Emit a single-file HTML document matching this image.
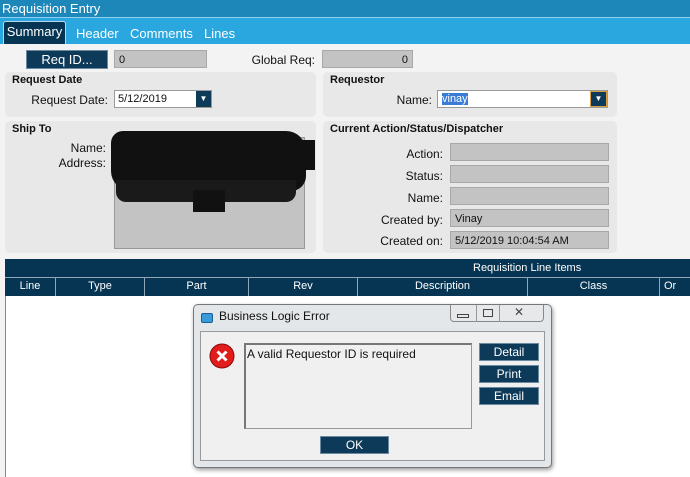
<!DOCTYPE html>
<html><head><style>
*{margin:0;padding:0;box-sizing:border-box}
body{width:690px;height:477px;overflow:hidden;background:#f3f3f3;font-family:"Liberation Sans",Arial,sans-serif;font-size:11px;color:#111;position:relative}
.a{position:absolute}
.fld{position:absolute;background:#c3c3c3;border:1px solid #a8a8a8;padding:3px 4px 0;font-size:11px}
.pnl{position:absolute;background:#e8e8e8;border-radius:5px}
.pt{position:absolute;font-weight:bold;font-size:11px}
.lbl{position:absolute;text-align:right;font-size:12px}
.btn{position:absolute;background:#0e3a5a;color:#fff;text-align:center;font-size:12px;border:1px solid #6b8aa0}
.col{position:absolute;top:277px;height:19px;color:#fff;border-right:1px solid #8fa7b8;text-align:center;line-height:19px;font-size:11px}
</style></head><body>
<div class="a" style="left:0;top:0;width:690px;height:17px;background:#1d87b9;color:#fff;font-size:13px;padding-left:2px;line-height:17px">Requisition Entry</div>
<div class="a" style="left:0;top:17px;width:690px;height:27px;background:#2aa7df;border-top:1px solid #8fd0ee"></div>
<div class="a" style="left:3px;top:21px;width:63px;height:23px;background:#053553;border:1px solid #b9d9ea;border-bottom:none;border-radius:3px 3px 0 0;color:#fff;font-size:13px;line-height:20px;text-align:center">Summary</div>
<div class="a" style="left:76px;top:26px;color:#fff;font-size:13px">Header</div>
<div class="a" style="left:130px;top:26px;color:#fff;font-size:13px">Comments</div>
<div class="a" style="left:204px;top:26px;color:#fff;font-size:13px">Lines</div>

<div class="btn" style="left:26px;top:50px;width:82px;height:19px;line-height:17px;font-size:13px">Req ID...</div>
<div class="fld" style="left:114px;top:50px;width:93px;height:18px">0</div>
<div class="lbl" style="left:230px;top:53px;width:85px">Global Req:</div>
<div class="fld" style="left:322px;top:50px;width:91px;height:18px;text-align:right">0</div>

<div class="pnl" style="left:5px;top:72px;width:311px;height:45px"></div>
<div class="pt" style="left:12px;top:74px">Request Date</div>
<div class="lbl" style="left:20px;top:93px;width:88px">Request Date:</div>
<div class="a" style="left:114px;top:90px;width:98px;height:18px;background:#fff;border:1px solid #999;padding:2px 3px">5/12/2019</div>
<div class="a" style="left:196px;top:91px;width:15px;height:16px;background:#0e3a5a;color:#fff;font-size:8px;text-align:center;line-height:16px">▼</div>

<div class="pnl" style="left:323px;top:72px;width:294px;height:45px"></div>
<div class="pt" style="left:330px;top:74px">Requestor</div>
<div class="lbl" style="left:370px;top:93px;width:62px">Name:</div>
<div class="a" style="left:437px;top:90px;width:171px;height:18px;background:#fff;border:1px solid #999;padding:2px 4px"><span style="background:#3a7bd5;color:#fff">vinay</span></div>
<div class="a" style="left:590px;top:91px;width:17px;height:16px;background:#0e3a5a;border:1px solid #d8a040;color:#fff;font-size:8px;text-align:center;line-height:14px">▼</div>

<div class="pnl" style="left:5px;top:121px;width:311px;height:132px"></div>
<div class="pt" style="left:12px;top:123px">Ship To</div>
<div class="lbl" style="left:40px;top:141px;width:66px">Name:</div>
<div class="lbl" style="left:40px;top:156px;width:66px">Address:</div>
<div class="a" style="left:114px;top:137px;width:191px;height:112px;background:#c3c3c3;border:1px solid #999"></div>
<div class="a" style="left:111px;top:131px;width:195px;height:60px;background:#111;border-radius:12px 20px 15px 20px"></div>
<div class="a" style="left:116px;top:180px;width:180px;height:22px;background:#1a1a1a;border-radius:0 0 10px 10px"></div>
<div class="a" style="left:260px;top:140px;width:55px;height:30px;background:#111"></div>
<div class="a" style="left:193px;top:190px;width:32px;height:22px;background:#111"></div>

<div class="pnl" style="left:323px;top:121px;width:294px;height:132px"></div>
<div class="pt" style="left:330px;top:123px">Current Action/Status/Dispatcher</div>
<div class="lbl" style="left:360px;top:147px;width:83px">Action:</div>
<div class="fld" style="left:450px;top:143px;width:159px;height:18px"></div>
<div class="lbl" style="left:360px;top:169px;width:83px">Status:</div>
<div class="fld" style="left:450px;top:165px;width:159px;height:18px"></div>
<div class="lbl" style="left:360px;top:191px;width:83px">Name:</div>
<div class="fld" style="left:450px;top:187px;width:159px;height:18px"></div>
<div class="lbl" style="left:360px;top:213px;width:83px">Created by:</div>
<div class="fld" style="left:450px;top:209px;width:159px;height:18px">Vinay</div>
<div class="lbl" style="left:360px;top:234px;width:83px">Created on:</div>
<div class="fld" style="left:450px;top:231px;width:159px;height:18px">5/12/2019 10:04:54 AM</div>

<div class="a" style="left:5px;top:259px;width:685px;height:218px;background:#fff;border-left:1px solid #888"></div>
<div class="a" style="left:5px;top:259px;width:685px;height:18px;background:#053553;color:#fff;font-size:11px;line-height:18px"><span style="position:absolute;left:468px">Requisition Line Items</span></div>
<div class="a" style="left:5px;top:277px;width:685px;height:19px;background:#053553;border-top:1px solid #8fa7b8"></div>
<div class="col" style="left:5px;width:51px">Line</div>
<div class="col" style="left:56px;width:89px">Type</div>
<div class="col" style="left:145px;width:104px">Part</div>
<div class="col" style="left:249px;width:109px">Rev</div>
<div class="col" style="left:358px;width:170px">Description</div>
<div class="col" style="left:528px;width:132px">Class</div>
<div class="col" style="left:660px;width:40px;text-align:left;padding-left:4px;border:none">Or</div>

<div class="a" style="left:193px;top:304px;width:359px;height:164px;background:#e4e7ea;border:1px solid #777;border-radius:5px;box-shadow:1px 2px 4px rgba(0,0,0,.4)"></div>
<div class="a" style="left:201px;top:313px;width:12px;height:10px;background:#3a9ad9;border:1px solid #1d5f8f;border-radius:2px"></div>
<div class="a" style="left:219px;top:309px;font-size:12px">Business Logic Error</div>
<div class="a" style="left:450px;top:305px;width:94px;height:17px;border:1px solid #888;border-top:none;border-radius:0 0 4px 4px;background:#e6e8ea"></div>
<div class="a" style="left:476px;top:305px;width:1px;height:17px;background:#999"></div>
<div class="a" style="left:499px;top:305px;width:1px;height:17px;background:#999"></div>
<div class="a" style="left:457px;top:314px;width:12px;height:4px;border:1px solid #444"></div>
<div class="a" style="left:483px;top:309px;width:10px;height:8px;border:1px solid #444"></div>
<div class="a" style="left:514px;top:305px;font-size:12px;color:#444">✕</div>
<div class="a" style="left:200px;top:331px;width:345px;height:130px;background:#f0f0f0;border:1px solid #999"></div>
<svg class="a" style="left:209px;top:343px" width="26" height="26"><circle cx="13" cy="13" r="12" fill="#e21b1b" stroke="#8a0a0a"/><path d="M8.5 8.5L17.5 17.5M17.5 8.5L8.5 17.5" stroke="#fff" stroke-width="3"/></svg>
<div class="a" style="left:244px;top:343px;width:228px;height:86px;background:#f0f0f0;border:1px solid #999;border-left:2px solid #777;border-top:2px solid #777;padding:2px 1px;font-size:12px">A valid Requestor ID is required</div>
<div class="btn" style="left:479px;top:343px;width:60px;height:18px;line-height:16px">Detail</div>
<div class="btn" style="left:479px;top:365px;width:60px;height:18px;line-height:16px">Print</div>
<div class="btn" style="left:479px;top:387px;width:60px;height:18px;line-height:16px">Email</div>
<div class="btn" style="left:320px;top:436px;width:69px;height:18px;line-height:16px">OK</div>
</body></html>
